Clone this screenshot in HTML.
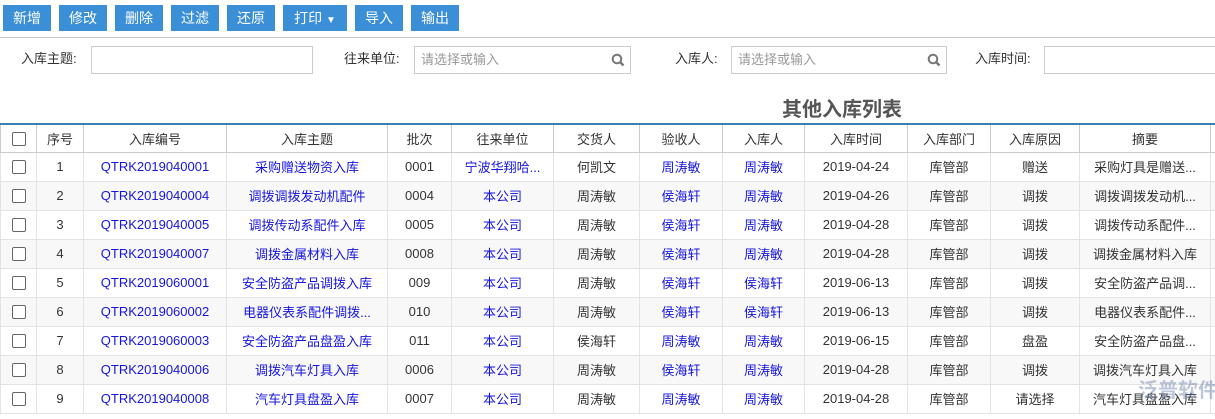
<!DOCTYPE html>
<html><head><meta charset="utf-8"><style>
*{margin:0;padding:0;box-sizing:border-box}
body{width:1215px;height:419px;overflow:hidden;background:#fff;font-family:"Liberation Sans","Noto Sans CJK SC",sans-serif;font-size:13px;color:#333;position:relative}
.btn{position:absolute;top:5px;height:26px;background:#3a8fd6;color:#fff;font-size:14px;line-height:26px;text-align:center}
.hr{position:absolute;top:37px;left:0;width:1215px;height:1px;background:#ccc}
.lbl{position:absolute;top:50px;font-size:13px;color:#333;line-height:18px}
.inp{position:absolute;top:46px;height:28px;border:1px solid #ccc;background:#fff;color:#999;font-size:13px;line-height:26px;padding-left:6px}
.mag{position:absolute;right:5px;top:6px}
.title{position:absolute;top:93px;left:782px;font-size:20px;font-weight:bold;color:#555}
table{position:absolute;top:123px;left:0;border-collapse:collapse;table-layout:fixed;width:1215px;border-top:2px solid #3c7fb5}
td,th{height:29px;text-align:center;white-space:nowrap;overflow:hidden;font-weight:normal;border:1px solid #e3e3e3;font-size:13px}
th{border-color:#ccc;color:#333;height:28px;background:#fff}
tr:nth-child(odd) td{background:#f8f8f8}
.b{color:#1515e0}
.cb{display:inline-block;width:14px;height:14px;border:1px solid #666;border-radius:2px;vertical-align:middle;background:#fff}
.wm{position:absolute;left:1138px;top:374px;font-size:20px;color:rgba(90,110,160,.4);font-weight:bold;white-space:nowrap}
</style></head><body>
<div class="btn" style="left:3px;width:48px">新增</div>
<div class="btn" style="left:59px;width:48px">修改</div>
<div class="btn" style="left:115px;width:48px">删除</div>
<div class="btn" style="left:171px;width:48px">过滤</div>
<div class="btn" style="left:227px;width:48px">还原</div>
<div class="btn" style="left:283px;width:64px">打印 <span style="font-size:10px">▼</span></div>
<div class="btn" style="left:355px;width:48px">导入</div>
<div class="btn" style="left:411px;width:48px">输出</div>
<div class="hr"></div>
<div class="lbl" style="left:21px">入库主题:</div>
<div class="inp" style="left:91px;width:222px"></div>
<div class="lbl" style="left:344px">往来单位:</div>
<div class="inp" style="left:414px;width:217px">请选择或输入<svg class="mag" width="14" height="14" viewBox="0 0 14 14"><circle cx="6" cy="6" r="4.3" fill="none" stroke="#777" stroke-width="2"/><path d="M9 9l3.5 3.5" stroke="#777" stroke-width="2.4"/></svg></div>
<div class="lbl" style="left:675px">入库人:</div>
<div class="inp" style="left:731px;width:216px">请选择或输入<svg class="mag" width="14" height="14" viewBox="0 0 14 14"><circle cx="6" cy="6" r="4.3" fill="none" stroke="#777" stroke-width="2"/><path d="M9 9l3.5 3.5" stroke="#777" stroke-width="2.4"/></svg></div>
<div class="lbl" style="left:975px">入库时间:</div>
<div class="inp" style="left:1044px;width:180px"></div>
<div class="title">其他入库列表</div>
<table>
<colgroup><col style="width:36px"><col style="width:47px"><col style="width:143px"><col style="width:161px"><col style="width:64px"><col style="width:102px"><col style="width:86px"><col style="width:83px"><col style="width:82px"><col style="width:103px"><col style="width:83px"><col style="width:89px"><col style="width:131px"><col style="width:5px"></colgroup>
<tr><th><span class="cb"></span></th><th>序号</th><th>入库编号</th><th>入库主题</th><th>批次</th><th>往来单位</th><th>交货人</th><th>验收人</th><th>入库人</th><th>入库时间</th><th>入库部门</th><th>入库原因</th><th>摘要</th><th></th></tr>
<tr><td><span class="cb"></span></td><td>1</td><td class="b">QTRK2019040001</td><td class="b">采购赠送物资入库</td><td>0001</td><td class="b">宁波华翔哈...</td><td>何凯文</td><td class="b">周涛敏</td><td class="b">周涛敏</td><td>2019-04-24</td><td>库管部</td><td>赠送</td><td>采购灯具是赠送...</td><td></td></tr>
<tr><td><span class="cb"></span></td><td>2</td><td class="b">QTRK2019040004</td><td class="b">调拨调拨发动机配件</td><td>0004</td><td class="b">本公司</td><td>周涛敏</td><td class="b">侯海轩</td><td class="b">周涛敏</td><td>2019-04-26</td><td>库管部</td><td>调拨</td><td>调拨调拨发动机...</td><td></td></tr>
<tr><td><span class="cb"></span></td><td>3</td><td class="b">QTRK2019040005</td><td class="b">调拨传动系配件入库</td><td>0005</td><td class="b">本公司</td><td>周涛敏</td><td class="b">侯海轩</td><td class="b">周涛敏</td><td>2019-04-28</td><td>库管部</td><td>调拨</td><td>调拨传动系配件...</td><td></td></tr>
<tr><td><span class="cb"></span></td><td>4</td><td class="b">QTRK2019040007</td><td class="b">调拨金属材料入库</td><td>0008</td><td class="b">本公司</td><td>周涛敏</td><td class="b">侯海轩</td><td class="b">周涛敏</td><td>2019-04-28</td><td>库管部</td><td>调拨</td><td>调拨金属材料入库</td><td></td></tr>
<tr><td><span class="cb"></span></td><td>5</td><td class="b">QTRK2019060001</td><td class="b">安全防盗产品调拨入库</td><td>009</td><td class="b">本公司</td><td>周涛敏</td><td class="b">侯海轩</td><td class="b">侯海轩</td><td>2019-06-13</td><td>库管部</td><td>调拨</td><td>安全防盗产品调...</td><td></td></tr>
<tr><td><span class="cb"></span></td><td>6</td><td class="b">QTRK2019060002</td><td class="b">电器仪表系配件调拨...</td><td>010</td><td class="b">本公司</td><td>周涛敏</td><td class="b">侯海轩</td><td class="b">侯海轩</td><td>2019-06-13</td><td>库管部</td><td>调拨</td><td>电器仪表系配件...</td><td></td></tr>
<tr><td><span class="cb"></span></td><td>7</td><td class="b">QTRK2019060003</td><td class="b">安全防盗产品盘盈入库</td><td>011</td><td class="b">本公司</td><td>侯海轩</td><td class="b">周涛敏</td><td class="b">周涛敏</td><td>2019-06-15</td><td>库管部</td><td>盘盈</td><td>安全防盗产品盘...</td><td></td></tr>
<tr><td><span class="cb"></span></td><td>8</td><td class="b">QTRK2019040006</td><td class="b">调拨汽车灯具入库</td><td>0006</td><td class="b">本公司</td><td>周涛敏</td><td class="b">侯海轩</td><td class="b">周涛敏</td><td>2019-04-28</td><td>库管部</td><td>调拨</td><td>调拨汽车灯具入库</td><td></td></tr>
<tr><td><span class="cb"></span></td><td>9</td><td class="b">QTRK2019040008</td><td class="b">汽车灯具盘盈入库</td><td>0007</td><td class="b">本公司</td><td>周涛敏</td><td class="b">周涛敏</td><td class="b">周涛敏</td><td>2019-04-28</td><td>库管部</td><td>请选择</td><td>汽车灯具盘盈入库</td><td></td></tr>
</table>
<div class="wm">泛普软件</div>
</body></html>
